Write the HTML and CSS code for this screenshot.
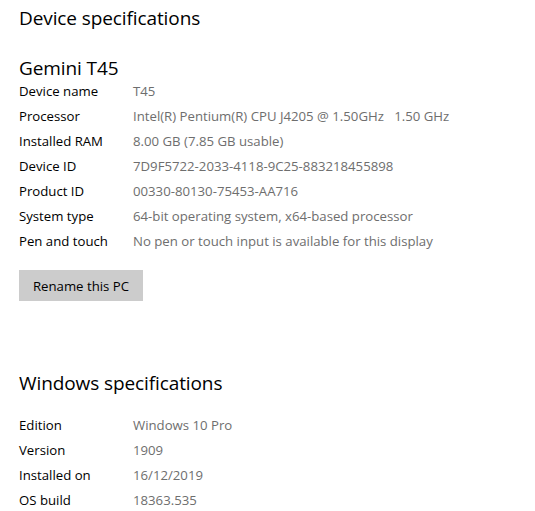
FILE: index.html
```html
<!DOCTYPE html>
<html>
<head>
<meta charset="utf-8">
<link rel="stylesheet" href="styles.css">
</head>
<body>
<main class="page">
  <h1 class="title">Device specifications</h1>
  <h2 class="subtitle">Gemini T45</h2>
  <dl class="specs">
    <dt>Device name</dt><dd>T45</dd>
    <dt>Processor</dt><dd>Intel(R) Pentium(R) CPU J4205 @ 1.50GHz&nbsp;&nbsp;&nbsp;1.50 GHz</dd>
    <dt>Installed RAM</dt><dd>8.00 GB (7.85 GB usable)</dd>
    <dt>Device ID</dt><dd>7D9F5722-2033-4118-9C25-883218455898</dd>
    <dt>Product ID</dt><dd>00330-80130-75453-AA716</dd>
    <dt>System type</dt><dd>64-bit operating system, x64-based processor</dd>
    <dt>Pen and touch</dt><dd>No pen or touch input is available for this display</dd>
  </dl>
  <button class="btn">Rename this PC</button>
  <h1 class="title title-win">Windows specifications</h1>
  <dl class="specs specs-win">
    <dt>Edition</dt><dd>Windows 10 Pro</dd>
    <dt>Version</dt><dd>1909</dd>
    <dt>Installed on</dt><dd>16/12/2019</dd>
    <dt>OS build</dt><dd>18363.535</dd>
  </dl>
</main>
</body>
</html>
```
FILE: styles.css
```css
html, body {
  margin: 0;
  padding: 0;
  background: #ffffff;
}
body {
  font-family: "Open Sans", "Noto Sans", sans-serif;
  color: #000000;
}
.page {
  padding: 0 0 0 19px;
  display: flex;
  flex-direction: column;
  align-items: flex-start;
}
.title {
  margin: 4px 0 0 0;
  font-size: 19px;
  font-weight: 400;
  line-height: 28px;
  letter-spacing: -0.1px;
}
.subtitle {
  margin: 25px 0 0 0;
  font-size: 19px;
  font-weight: 400;
  line-height: 22px;
  letter-spacing: -0.1px;
}
.specs {
  margin: -1px 0 0 0;
  display: grid;
  grid-template-columns: 114px auto;
  grid-auto-rows: 25px;
  align-items: center;
  font-size: 13.2px;
}
.specs dt {
  margin: 0;
  color: #000000;
}
.specs dd {
  margin: 0;
  color: #6e6e6e;
  white-space: nowrap;
}
.btn {
  margin-top: 17px;
  width: 124px;
  height: 31px;
  border: none;
  background: #cccccc;
  font-family: inherit;
  font-size: 13.2px;
  color: #000000;
  padding: 0;
}
.title-win {
  margin-top: 68px;
}
.specs-win {
  margin-top: 15px;
}
```
